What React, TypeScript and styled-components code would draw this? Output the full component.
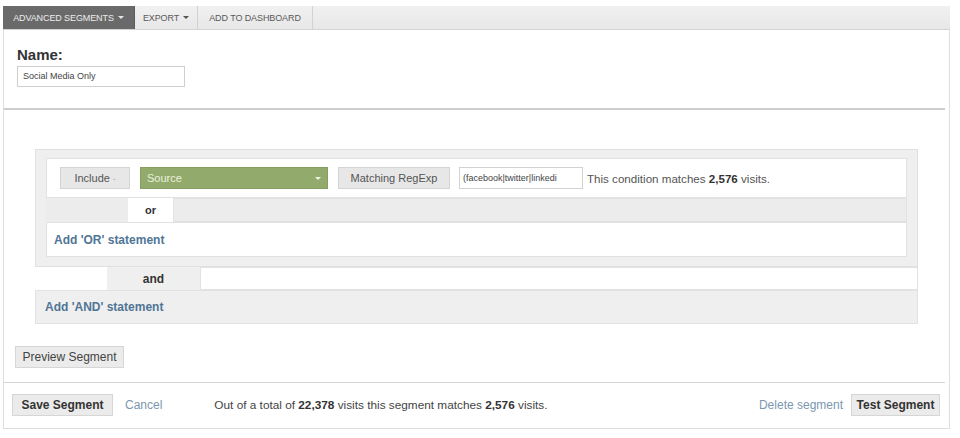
import React from "react";
import styled, { createGlobalStyle } from "styled-components";

const Global = createGlobalStyle`
  html, body { margin: 0; padding: 0; background: #fff; }
  body { font-family: "Liberation Sans", Arial, sans-serif; color: #444; }
  * { box-sizing: border-box; }
`;

const Panel = styled.div`
  margin: 6px 0 0 3px;
  width: 947px;
  height: 423px;
  border: 1px solid #dedede;
  border-top: none;
  display: flex;
  flex-direction: column;
  background: #fff;
`;

const Toolbar = styled.div`
  height: 24px;
  display: flex;
  background: linear-gradient(#f1f1f1, #e7e7e7);
  border-bottom: 1px solid #d3d3d3;
  margin-left: -1px;
  margin-right: -1px;
`;

const ToolButton = styled.div<{ $dark?: boolean; $w: number }>`
  width: ${(p) => p.$w}px;
  display: flex;
  align-items: center;
  justify-content: center;
  gap: 4px;
  font-size: 9px;
  letter-spacing: -0.1px;
  text-transform: uppercase;
  color: ${(p) => (p.$dark ? "#ececec" : "#5a5a5a")};
  background: ${(p) => (p.$dark ? "#6a6a6a" : "transparent")};
  border-right: 1px solid ${(p) => (p.$dark ? "#5c5c5c" : "#d2d2d2")};
`;

const Caret = styled.span<{ $color?: string }>`
  display: inline-block;
  width: 0;
  height: 0;
  border-left: 3px solid transparent;
  border-right: 3px solid transparent;
  border-top: 3px solid ${(p) => p.$color || "#555"};
`;

const NameSection = styled.div`
  padding: 17px 0 0 13px;
  height: 78px;
`;

const NameLabel = styled.div`
  font-size: 15px;
  font-weight: bold;
  color: #333;
  line-height: 16px;
`;

const NameInput = styled.div`
  margin-top: 3px;
  width: 168px;
  height: 21px;
  border: 1px solid #cfcfcf;
  font-size: 9px;
  color: #444;
  padding: 4px 5px;
`;

const Rule = styled.div`
  height: 2px;
  background: #cdcdcd;
  margin-right: 4px;
`;

const Builder = styled.div`
  padding: 39px 31px 0 31px;
`;

const OrGroup = styled.div`
  background: #efefef;
  border: 1px solid #e0e0e0;
  padding: 8px 10px 9px 10px;
`;

const WhiteRow = styled.div<{ $h: number }>`
  height: ${(p) => p.$h}px;
  background: #fff;
  border: 1px solid #e2e2e2;
  display: flex;
  align-items: center;
`;

const ConditionRow = styled(WhiteRow)`
  padding-left: 13px;
  gap: 10px;
`;

const GrayButton = styled.div<{ $w: number }>`
  width: ${(p) => p.$w}px;
  height: 22px;
  background: #e7e7e7;
  border: 1px solid #d4d4d4;
  display: flex;
  align-items: center;
  justify-content: center;
  font-size: 11px;
  color: #555;
  gap: 3px;
`;

const Dash = styled.span`
  font-size: 8px;
  color: #999;
`;

const SourceSelect = styled.div`
  width: 188px;
  height: 22px;
  background: #93aa6d;
  border: 1px solid #86a063;
  display: flex;
  align-items: center;
  justify-content: space-between;
  padding: 0 6px 0 6px;
  font-size: 11px;
  color: #e9f1dc;
`;

const RegexInput = styled.div`
  width: 124px;
  height: 22px;
  border: 1px solid #d2d2d2;
  background: #fff;
  font-size: 9px;
  color: #444;
  padding: 5px 3px;
  white-space: nowrap;
  overflow: hidden;
  margin-left: -1px;
`;

const ConditionText = styled.div`
  font-size: 11.6px;
  color: #555;
  margin-left: -6px;
`;

const Strong = styled.b`
  color: #333;
`;

const ConnectorRow = styled.div`
  height: 24px;
  display: flex;
`;

const Fill = styled.div<{ $w?: number; $bg: string; $border?: boolean }>`
  ${(p) => (p.$w ? `width: ${p.$w}px;` : "flex: 1;")}
  background: ${(p) => p.$bg};
  ${(p) => (p.$border ? "border: 1px solid #e2e2e2;" : "")}
`;

const Tab = styled.div<{ $w: number; $bg: string; $size: number }>`
  width: ${(p) => p.$w}px;
  background: ${(p) => p.$bg};
  display: flex;
  align-items: center;
  justify-content: center;
  font-weight: bold;
  font-size: ${(p) => p.$size}px;
  color: #333;
`;

const LinkBold = styled.a`
  font-size: 12px;
  font-weight: bold;
  color: #4f7596;
  text-decoration: none;
`;

const AddOrRow = styled(WhiteRow)`
  padding-left: 7px;
`;

const AndRow = styled.div`
  height: 23px;
  display: flex;
`;

const AddAndBox = styled.div`
  height: 34px;
  background: #efefef;
  border: 1px solid #e2e2e2;
  display: flex;
  align-items: center;
  padding-left: 9px;
`;

const PreviewWrap = styled.div`
  padding: 22px 0 14px 11px;
`;

const PlainButton = styled.div<{ $w: number; $bold?: boolean }>`
  width: ${(p) => p.$w}px;
  height: 22px;
  background: #ebebeb;
  border: 1px solid #d6d6d6;
  display: flex;
  align-items: center;
  justify-content: center;
  font-size: 12px;
  font-weight: ${(p) => (p.$bold ? "bold" : "normal")};
  color: ${(p) => (p.$bold ? "#333" : "#444")};
`;

const Footer = styled.div`
  border-top: 1px solid #d6d6d6;
  margin-right: 4px;
  flex: 1;
  display: flex;
  align-items: flex-start;
  padding: 11px 5px 0 8px;
`;

const Link = styled.a<{ $ml: number }>`
  margin-left: ${(p) => p.$ml}px;
  font-size: 12px;
  color: #7a98b0;
  text-decoration: none;
  line-height: 22px;
`;

const FooterText = styled.div`
  margin-left: 52px;
  font-size: 11.8px;
  color: #444;
  line-height: 22px;
  flex: 1;
`;

const Spacer = styled.span`
  width: 8px;
`;

export default function App() {
  return (
    <>
      <Global />
      <Panel>
        <Toolbar>
          <ToolButton $dark $w={132}>
            Advanced Segments <Caret $color="#e6e6e6" />
          </ToolButton>
          <ToolButton $w={63}>
            Export <Caret />
          </ToolButton>
          <ToolButton $w={115}>Add to Dashboard</ToolButton>
        </Toolbar>
        <NameSection>
          <NameLabel>Name:</NameLabel>
          <NameInput>Social Media Only</NameInput>
        </NameSection>
        <Rule />
        <Builder>
          <OrGroup>
            <ConditionRow $h={40}>
              <GrayButton $w={70}>
                Include <Dash>-</Dash>
              </GrayButton>
              <SourceSelect>
                <span>Source</span>
                <Caret $color="#eef3e2" />
              </SourceSelect>
              <GrayButton $w={112}>Matching RegExp</GrayButton>
              <RegexInput>(facebook|twitter|linkedi</RegexInput>
              <ConditionText>
                This condition matches <Strong>2,576</Strong> visits.
              </ConditionText>
            </ConditionRow>
            <ConnectorRow>
              <Fill $w={82} $bg="#ececec" />
              <Tab $w={45} $bg="#fff" $size={11}>
                or
              </Tab>
              <Fill $bg="#ececec" $border />
            </ConnectorRow>
            <AddOrRow $h={35}>
              <LinkBold href="#">Add 'OR' statement</LinkBold>
            </AddOrRow>
          </OrGroup>
          <AndRow>
            <Fill $w={72} $bg="#fff" />
            <Tab $w={93} $bg="#efefef" $size={12}>
              and
            </Tab>
            <Fill $bg="#fff" $border />
          </AndRow>
          <AddAndBox>
            <LinkBold href="#">Add 'AND' statement</LinkBold>
          </AddAndBox>
        </Builder>
        <PreviewWrap>
          <PlainButton $w={109}>Preview Segment</PlainButton>
        </PreviewWrap>
        <Footer>
          <PlainButton $w={101} $bold>
            Save Segment
          </PlainButton>
          <Link href="#" $ml={12}>
            Cancel
          </Link>
          <FooterText>
            Out of a total of <Strong>22,378</Strong> visits this segment matches{" "}
            <Strong>2,576</Strong> visits.
          </FooterText>
          <Link href="#" $ml={0}>
            Delete segment
          </Link>
          <Spacer />
          <PlainButton $w={89} $bold>
            Test Segment
          </PlainButton>
        </Footer>
      </Panel>
    </>
  );
}
